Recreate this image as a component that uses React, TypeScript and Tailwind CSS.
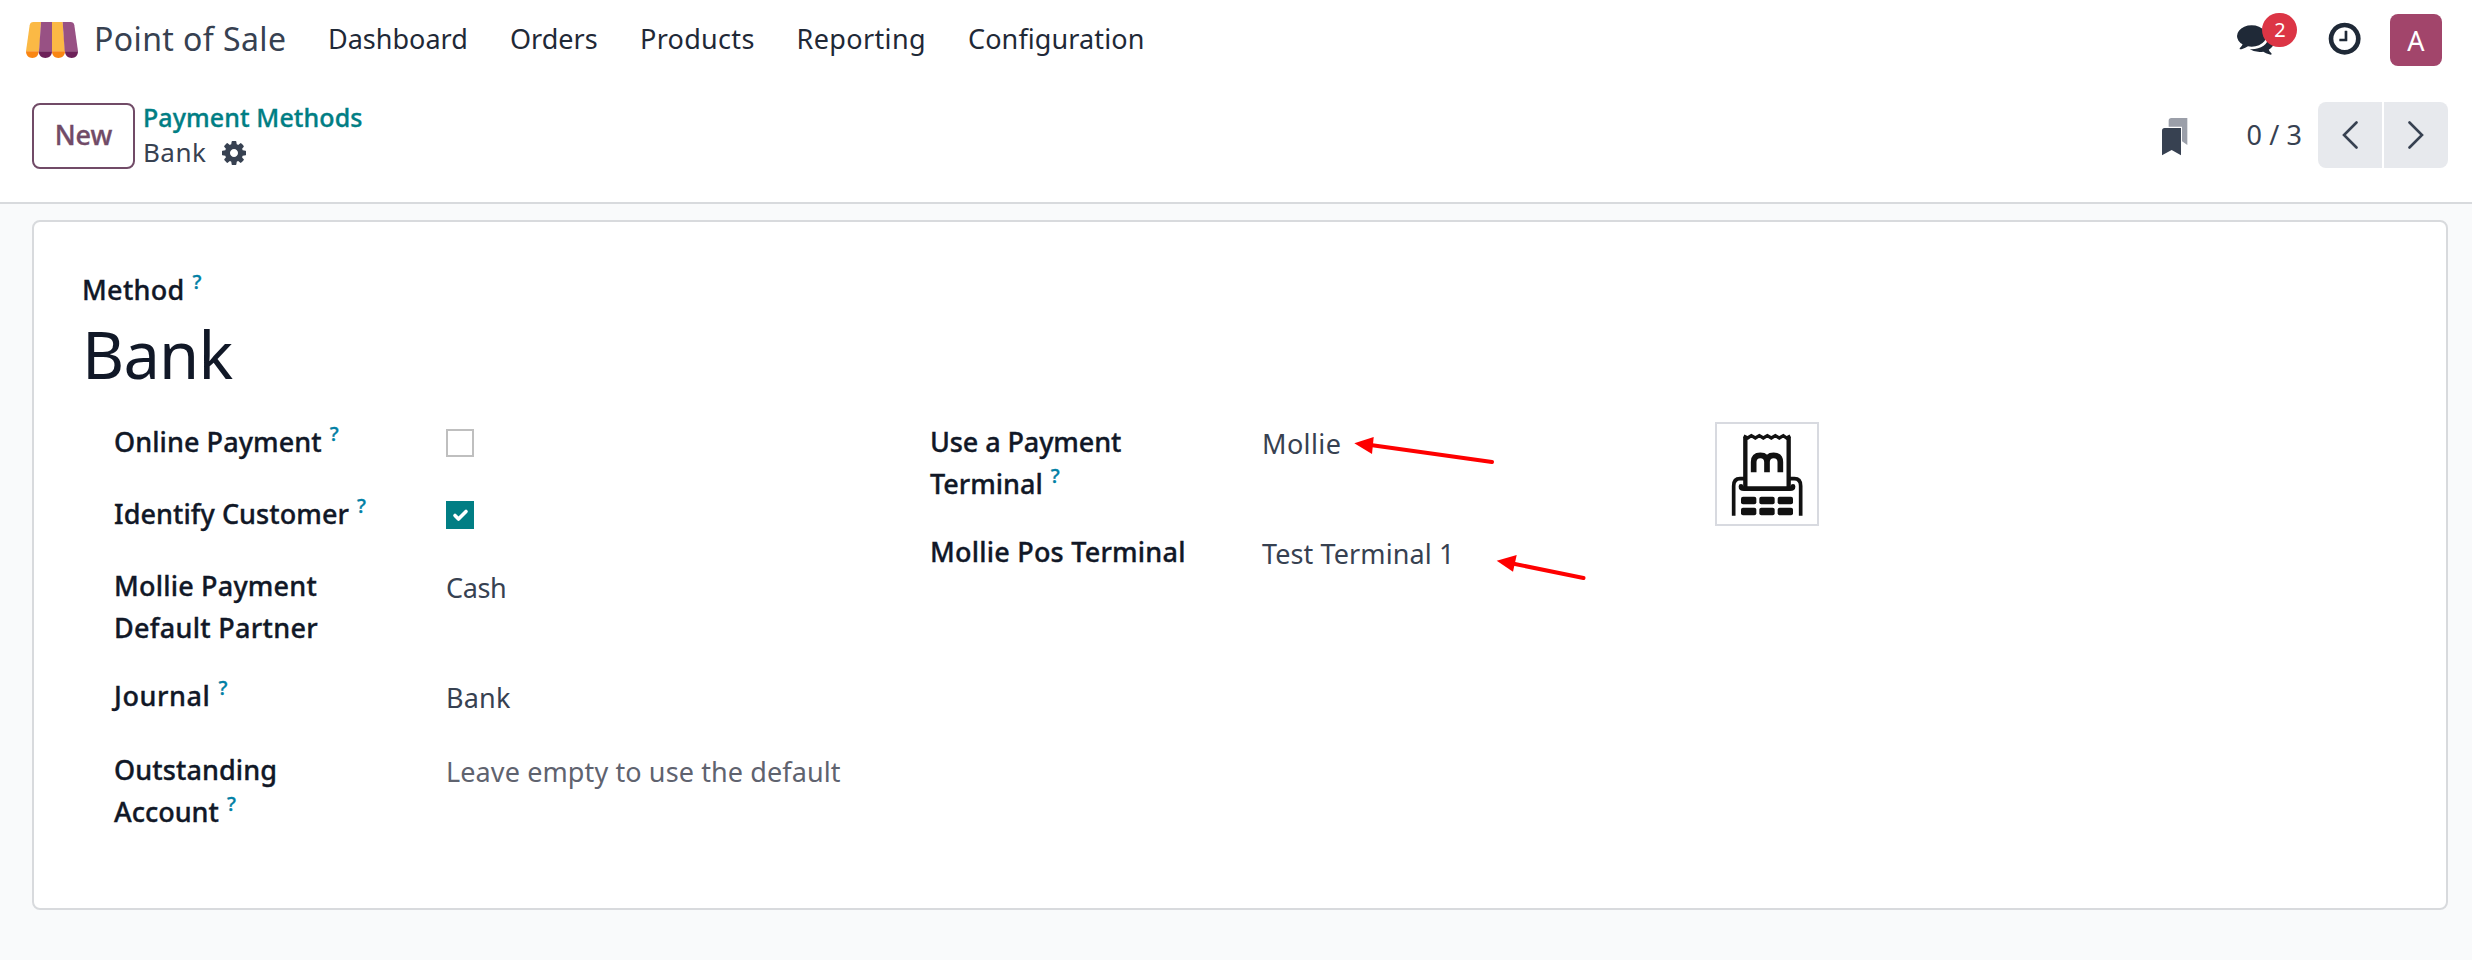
import type { ReactNode } from "react";

const COG =
  "M1152 896q0-106-75-181t-181-75-181 75-75 181 75 181 181 75 181-75 75-181zm512-109v222q0 12-8 23t-20 13l-185 28q-19 54-39 91 35 50 107 138 10 12 10 25t-9 23q-27 37-99 108t-94 71q-12 0-26-9l-138-108q-44 23-91 38-16 136-29 186-7 28-36 28h-222q-14 0-24.500-8.500t-11.500-21.500l-28-184q-49-16-90-37l-141 107q-10 9-25 9-14 0-25-11-126-114-165-168-7-10-7-23 0-12 8-23 15-21 51-66.500t54-70.500q-27-50-41-99l-183-27q-13-2-21-12.500t-8-23.500v-222q0-12 8-23t19-13l186-28q14-46 39-92-40-57-107-138-10-12-10-24 0-10 9-23 26-36 98.500-107.500t94.500-71.500q13 0 26 10l138 107q44-23 91-38 16-136 29-186 7-28 36-28h222q14 0 24.500 8.500t11.500 21.500l28 184q49 16 90 37l142-107q9-9 24-9 13 0 25 10 129 119 165 170 7 8 7 22 0 12-8 23-15 21-51 66.500t-54 70.500q26 50 41 98l183 28q13 2 21 12.500t8 23.500z";
const COMMENTS =
  "M1408 768q0 139-94 257t-256.500 186.500-353.500 68.500q-86 0-176-16-124 88-278 128-36 9-86 16h-3q-11 0-20.500-8t-11.500-21q-1-3-1-6.500t.5-6.500 2-6l2.500-5 3.500-5.500 4-5 4.500-5 4-4.500q5-6 23-25t26-29.500 22.500-29 25-38.500 20.500-44q-124-72-195-177t-71-224q0-139 94-257t256.500-186.500 353.500-68.500 353.500 68.500 256.500 186.500 94 257zm384 256q0 120-71 224.500t-195 176.500q10 24 20.500 44t25 38.500 22.500 29 26 29.500 23 25q1 1 4 4.500t4.500 5 4 5 3.500 5.500l2.500 5 2 6 .5 6.500-1 6.500q-3 14-13 22t-22 7q-50-7-86-16-154-40-278-128-90 16-176 16-271 0-472-132 58 4 88 4 161 0 309-45t264-129q125-92 192-212t67-254q0-77-23-152 129 71 204 178t75 230z";
const CLOCK =
  "M1024 544v448q0 14-9 23t-23 9h-320q-14 0-23-9t-9-23v-64q0-14 9-23t23-9h224v-352q0-14 9-23t23-9h64q14 0 23 9t9 23zm416 352q0-148-73-273t-198-198-273-73-273 73-198 198-73 273 73 273 198 198 273 73 273-73 198-198 73-273zm224 0q0 209-103 385.500t-279.500 279.500-385.500 103-385.500-103-279.500-279.500-103-385.500 103-385.500 279.500-279.500 385.500-103 385.500 103 279.500 279.500 103 385.500z";

function Glyph({ d, className }: { d: string; className: string }) {
  return (
    <svg viewBox="0 0 1792 1792" className={className} fill="currentColor" aria-hidden="true">
      <path d={d} />
    </svg>
  );
}

function Logo() {
  return (
    <svg viewBox="0 0 156 108" className="mt-[2px] block h-[36px] w-[52px]" aria-hidden="true">
      <path d="M22 0H45L40 88H0L11 10Q13 0 22 0Z" fill="#fbb945" />
      <path d="M45 0H78V88H39Z" fill="#985184" />
      <path d="M78 0H110L117 88H78Z" fill="#fbb945" />
      <path d="M110 0H134Q143 0 145 10L156 88H116Z" fill="#985184" />
      <path d="M0 88H38C38 101 30 108 19 108S0 101 0 88Z" fill="#f98613" />
      <path d="M38 88H78C78 101 69 108 58 108S38 101 38 88Z" fill="#6d2159" />
      <path d="M78 88H117C117 101 108 108 97 108S78 101 78 88Z" fill="#f98613" />
      <path d="M117 88H156C156 101 148 108 137 108S117 101 117 88Z" fill="#6d2159" />
    </svg>
  );
}

function Bookmarks() {
  return (
    <svg viewBox="0 0 78 114" className="block h-[38px] w-[26px]" aria-hidden="true">
      <path d="M20 26V8Q20 0 28 0H76V81L60 70V26Z" fill="#9b9fa9" />
      <path d="M0 112V38Q0 30 8 30H57V112L29 96Z" fill="#374151" />
    </svg>
  );
}

function Help() {
  return <span className="ml-[8px] align-[11px] text-[20px] leading-none text-[#0180a5]">?</span>;
}

function Terminal() {
  return (
    <svg viewBox="45 36 312 312" className="block h-[104px] w-[104px]" fill="none" stroke="#111" aria-hidden="true">
      <rect x="48" y="39" width="306" height="306" fill="#fff" stroke="#d8dae0" strokeWidth="6" />
      <path d="M136 232V82M266 232V82" strokeWidth="13" />
      <path d="M131 78L143 84L154 77L166 84L178 77L190 84L202 77L214 84L226 77L238 84L250 77L260 84L271 78" strokeWidth="10" />
      <path d="M161 187V156Q161 136 181 136Q201 136 201 156V187M201 156Q201 136 221 136Q241 136 241 156V187" strokeWidth="17" />
      <path d="M101 317V228Q101 206 120 206H132M270 206H283Q302 206 302 228V317" strokeWidth="11" />
      <path d="M123 229V230Q123 236 132 236H270Q279 236 279 230V229" strokeWidth="14" strokeLinecap="round" />
      <g fill="#111" stroke="none">
        <rect x="123" y="260" width="46" height="23" rx="6" />
        <rect x="178" y="260" width="46" height="23" rx="6" />
        <rect x="233" y="260" width="46" height="23" rx="6" />
        <rect x="123" y="293" width="46" height="23" rx="6" />
        <rect x="178" y="293" width="46" height="23" rx="6" />
        <rect x="233" y="293" width="46" height="23" rx="6" />
      </g>
    </svg>
  );
}

function Field({ label, height, children }: { label: ReactNode; height: string; children: ReactNode }) {
  return (
    <div className={`flex ${height}`}>
      <div className="w-[332px] shrink-0 font-medium text-[#111827] [-webkit-text-stroke:0.35px]">{label}</div>
      <div className="text-[#374151]">{children}</div>
    </div>
  );
}

export default function App() {
  return (
    <div className="flex h-[960px] w-[2472px] flex-col overflow-hidden bg-[#f9fafb] font-['Noto_Sans',sans-serif] text-[27px] leading-[42px] text-[#374151]">
      <header className="flex h-[78px] shrink-0 items-center bg-white pr-[30px] pl-[26px] text-[#1f2937]">
        <Logo />
        <span className="ml-[16px] w-[234px] text-[32px] tracking-[0.4px] whitespace-nowrap text-[#374151]">Point of Sale</span>
        <nav className="flex flex-1 whitespace-nowrap">
          <span className="w-[182px]">Dashboard</span>
          <span className="w-[130px]">Orders</span>
          <span className="w-[156.500px] tracking-[0.3px]">Products</span>
          <span className="w-[171.500px] tracking-[0.37px]">Reporting</span>
          <span className="tracking-[0.1px]">Configuration</span>
        </nav>
        <div className="relative mr-[51px]">
          <Glyph d={COMMENTS} className="block h-[37.300px] w-[37.300px]" />
          <span className="absolute top-[-7px] left-[25px] flex h-[34px] w-[35px] items-center justify-center rounded-full bg-[#dc3545] text-[20px] leading-none text-white">
            2
          </span>
        </div>
        <Glyph d={CLOCK} className="mr-[27px] block h-[37.300px] w-[37.300px]" />
        <div className="mt-[2px] flex h-[52px] w-[52px] items-center justify-center rounded-[8px] bg-[#a2456b] leading-none text-white">A</div>
      </header>

      <div className="flex h-[126px] shrink-0 items-start border-b-2 border-[#d8dadd] bg-white pr-[24px] pl-[32px]">
        <button className="mt-[25px] h-[66px] w-[103px] rounded-[8px] border-2 border-[#714b67] pb-[2px] font-medium text-[#714b67] [-webkit-text-stroke:0.35px]">
          New
        </button>
        <div className="mt-[22px] ml-[8px] flex flex-col leading-[35px]">
          <span className="text-[25px] font-medium tracking-[0.1px] text-[#017e84] [-webkit-text-stroke:0.35px]">Payment Methods</span>
          <div className="flex items-center">
            <span className="text-[26px] tracking-[0.45px]">Bank</span>
            <Glyph d={COG} className="ml-[14px] block h-[28px] w-[28px]" />
          </div>
        </div>
        <div className="mt-[24px] ml-auto flex h-[66px] items-center">
          <div className="mt-[3px] mr-[59px]">
            <Bookmarks />
          </div>
          <span className="mr-[16px] tracking-[0.1px]">0 / 3</span>
          <div className="flex gap-[2px]">
            <button className="flex h-[66px] w-[64px] items-center justify-center rounded-l-[8px] bg-[#e7e9ed]">
              <svg viewBox="0 0 16 28" className="h-[28px] w-[16px]" fill="none" stroke="#374151" strokeWidth="2.600" strokeLinecap="round">
                <path d="M14.500 1.500L2 14L14.500 26.500" />
              </svg>
            </button>
            <button className="flex h-[66px] w-[64px] items-center justify-center rounded-r-[8px] bg-[#e7e9ed]">
              <svg viewBox="0 0 16 28" className="h-[28px] w-[16px]" fill="none" stroke="#374151" strokeWidth="2.600" strokeLinecap="round">
                <path d="M1.500 1.500L14 14L1.500 26.500" />
              </svg>
            </button>
          </div>
        </div>
      </div>

      <main className="mt-[16px] mr-[24px] ml-[32px] h-[690px] rounded-[8px] border-2 border-[#d8dadd] bg-white px-[48px] pt-[47px]">
        <div className="font-medium tracking-[0.3px] text-[#111827] [-webkit-text-stroke:0.35px]">
          Method
          <Help />
        </div>
        <h1 className="mt-[1px] text-[65px] leading-[84px] tracking-[-0.8px] text-[#111827]">Bank</h1>

        <div className="mt-[25px] flex pl-[32px]">
          <section className="w-[816px]">
            <Field height="h-[72px]" label={<span className="tracking-[0.07px]">Online Payment<Help /></span>}>
              <div className="mt-[8px] h-[28px] w-[28px] border-2 border-[#bfbfbf] bg-white" />
            </Field>
            <Field height="h-[72px]" label={<span className="tracking-[0.07px]">Identify Customer<Help /></span>}>
              <div className="mt-[8px] flex h-[28px] w-[28px] items-center justify-center bg-[#017e84]">
                <svg viewBox="0 0 28 28" className="h-[28px] w-[28px]" fill="none" stroke="#fff" strokeWidth="3.600" strokeLinecap="round" strokeLinejoin="round">
                  <path d="M9 14.500L12.500 18L20 10.500" />
                </svg>
              </div>
            </Field>
            <Field
              height="h-[110px]"
              label={
                <>
                  <div className="tracking-[0.2px]">Mollie Payment</div>
                  <div className="tracking-[0.3px]">Default Partner</div>
                </>
              }
            >
              <div className="pt-[2px] tracking-[-0.36px]">Cash</div>
            </Field>
            <Field height="h-[74px]" label={<span className="tracking-[0.58px]">Journal<Help /></span>}>
              <div className="pt-[2px] tracking-[0.2px]">Bank</div>
            </Field>
            <Field
              height="h-[84px]"
              label={
                <>
                  <div className="tracking-[0.1px]">Outstanding</div>
                  <div>Account<Help /></div>
                </>
              }
            >
              <div className="pt-[2px] tracking-[0.11px] whitespace-nowrap text-[#5f636f]">Leave empty to use the default</div>
            </Field>
          </section>

          <section className="w-[785px]">
            <Field
              height="h-[110px]"
              label={
                <>
                  <div className="tracking-[-0.1px]">Use a Payment</div>
                  <div>Terminal<Help /></div>
                </>
              }
            >
              <div className="relative pt-[2px] tracking-[0.4px]">
                Mollie
                <svg viewBox="0 0 145 30" className="absolute top-[13px] left-[90px] h-[30px] w-[145px]" aria-hidden="true">
                  <path d="M15 10.500L140 28" stroke="#fe0000" strokeWidth="4" strokeLinecap="round" />
                  <path d="M2.300 9.300L21.700 3L20 20Z" fill="#fe0000" />
                </svg>
              </div>
            </Field>
            <Field height="h-[72px]" label={<span className="tracking-[0.22px]">Mollie Pos Terminal</span>}>
              <div className="relative pt-[2px] tracking-[0.1px]">
                Test Terminal 1
                <svg viewBox="0 0 100 30" className="absolute top-[21px] left-[232px] h-[30px] w-[100px]" aria-hidden="true">
                  <path d="M16 11L89.500 26" stroke="#fe0000" strokeWidth="4" strokeLinecap="round" />
                  <path d="M2.700 8.700L22.700 3L19 19.700Z" fill="#fe0000" />
                </svg>
              </div>
            </Field>
          </section>

          <div className="pt-[1px]">
            <Terminal />
          </div>
        </div>
      </main>
    </div>
  );
}
